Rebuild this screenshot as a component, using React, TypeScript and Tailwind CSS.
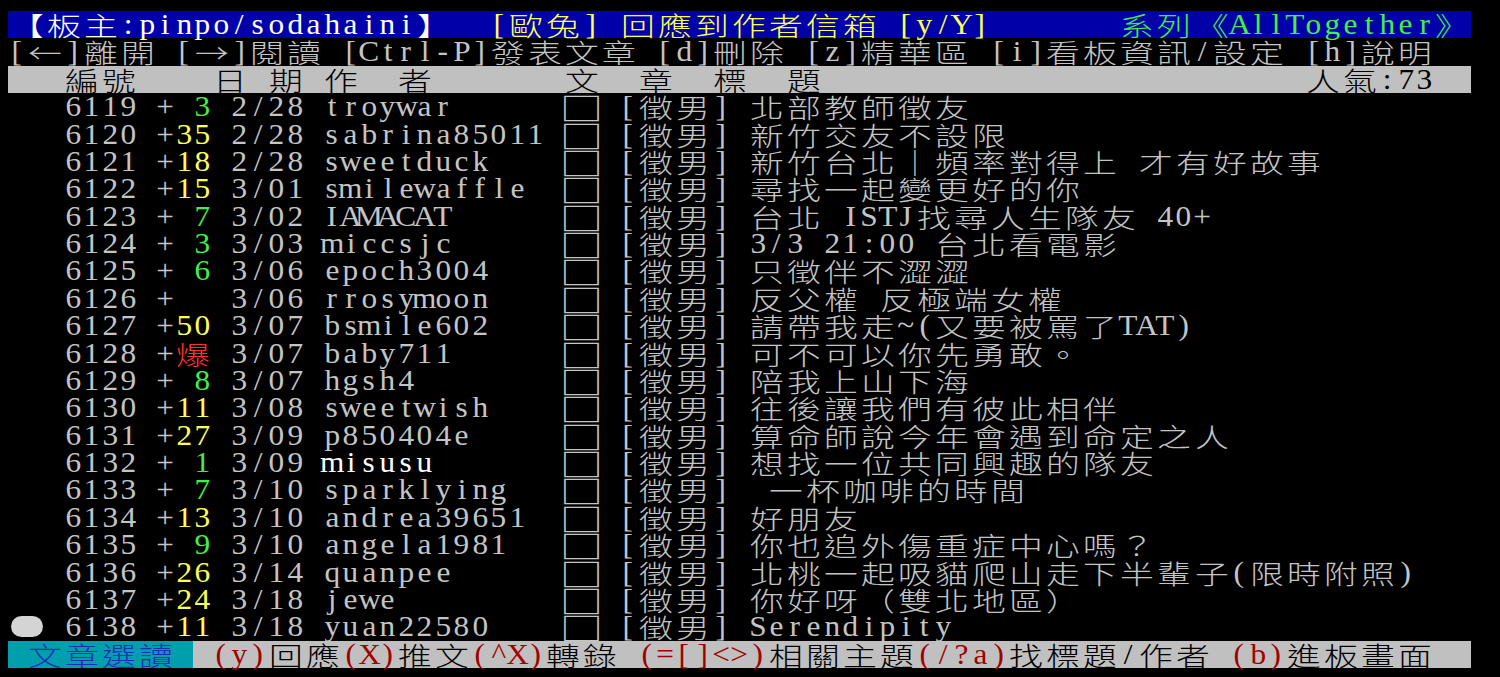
import React from 'react';

type Seg = { t: string; c: string; b?: string };

const G = 'text-[#c4c4c4]';
const WH = 'text-[#ffffff]';
const Y = 'text-[#ffff55]';
const GR = 'text-[#44ee44]';
const R = 'text-[#ff3030]';
const K = 'text-[#000000]';
const DR = 'text-[#a00000]';
const BL = 'text-[#1a2fb8]';

function Cells({ seg }: { seg: Seg }) {
  const bg = seg.b ?? '';
  return (
    <>
      {Array.from(seg.t).map((ch, i) => {
        if (ch === ' ') return <span key={i} className={`w-[18.52px] shrink-0 ${bg}`} />;
        if (ch === '□')
          return (
            <span key={i} className={`w-[37.04px] shrink-0 flex justify-center font-['Noto_Sans_CJK_TC','Noto_Sans_CJK_SC',sans-serif] text-[31px] ${seg.c} ${bg}`}>
              <span className="inline-block scale-x-[1.4]">{ch}</span>
            </span>
          );
        const wide = ch.charCodeAt(0) > 0x7e;
        return wide ? (
          <span key={i} className={`w-[37.04px] shrink-0 flex justify-center font-['Noto_Sans_CJK_TC','Noto_Sans_CJK_SC',sans-serif] text-[26px] font-light ${seg.c} ${bg}`}>
            <span className="inline-block scale-x-[1.3]">{ch}</span>
          </span>
        ) : (
          <span key={i} className={`w-[18.52px] shrink-0 flex justify-center font-['Liberation_Serif',serif] text-[29px] ${seg.c} ${bg}`}>
            <span className="inline-block scale-x-[1.08]">{ch}</span>
          </span>
        );
      })}
    </>
  );
}

function Row({ segs, bg = '', cursor = false }: { segs: Seg[]; bg?: string; cursor?: boolean }) {
  return (
    <div className={`flex h-[27.39px] leading-[27.39px] w-[1463px] ${bg}`}>
      {cursor && (
        <span className="w-[37.04px] shrink-0 flex items-center justify-center">
          <span className="block w-[32px] h-[21px] rounded-full bg-[#d4d4d4]" />
        </span>
      )}
      {segs.map((s, i) => (
        <Cells key={i} seg={s} />
      ))}
    </div>
  );
}

type Post = { n: number; cnt: string; cc: string; d: string; a: string; t: string; ac?: string; cur?: boolean };

const posts: Post[] = [
  { n: 6119, cnt: '3', cc: GR, d: '2/28', a: 'troywar', t: '北部教師徵友' },
  { n: 6120, cnt: '35', cc: Y, d: '2/28', a: 'sabrina85011', t: '新竹交友不設限' },
  { n: 6121, cnt: '18', cc: Y, d: '2/28', a: 'sweetduck', t: '新竹台北｜頻率對得上 才有好故事' },
  { n: 6122, cnt: '15', cc: Y, d: '3/01', a: 'smilewaffle', t: '尋找一起變更好的你' },
  { n: 6123, cnt: '7', cc: GR, d: '3/02', a: 'IAMACAT', t: '台北 ISTJ找尋人生隊友 40+' },
  { n: 6124, cnt: '3', cc: GR, d: '3/03', a: 'miccsjc', t: '3/3 21:00 台北看電影' },
  { n: 6125, cnt: '6', cc: GR, d: '3/06', a: 'epoch3004', t: '只徵伴不澀澀' },
  { n: 6126, cnt: '', cc: G, d: '3/06', a: 'rrosymoon', t: '反父權 反極端女權' },
  { n: 6127, cnt: '50', cc: Y, d: '3/07', a: 'bsmile602', t: '請帶我走~(又要被罵了TAT)' },
  { n: 6128, cnt: '爆', cc: R, d: '3/07', a: 'baby711', t: '可不可以你先勇敢。' },
  { n: 6129, cnt: '8', cc: GR, d: '3/07', a: 'hgsh4', t: '陪我上山下海' },
  { n: 6130, cnt: '11', cc: Y, d: '3/08', a: 'sweetwish', t: '往後讓我們有彼此相伴' },
  { n: 6131, cnt: '27', cc: Y, d: '3/09', a: 'p850404e', t: '算命師說今年會遇到命定之人' },
  { n: 6132, cnt: '1', cc: GR, d: '3/09', a: 'misusu', t: '想找一位共同興趣的隊友', ac: WH },
  { n: 6133, cnt: '7', cc: GR, d: '3/10', a: 'sparklying', t: ' 一杯咖啡的時間' },
  { n: 6134, cnt: '13', cc: Y, d: '3/10', a: 'andrea39651', t: '好朋友' },
  { n: 6135, cnt: '9', cc: GR, d: '3/10', a: 'angela1981', t: '你也追外傷重症中心嗎？' },
  { n: 6136, cnt: '26', cc: Y, d: '3/14', a: 'quanpee', t: '北桃一起吸貓爬山走下半輩子(限時附照)' },
  { n: 6137, cnt: '24', cc: Y, d: '3/18', a: 'jewe', t: '你好呀（雙北地區）' },
  { n: 6138, cnt: '11', cc: Y, d: '3/18', a: 'yuan22580', t: 'Serendipity', cur: true },
];

function PostRow({ p }: { p: Post }) {
  const cnt = p.cnt === '爆' ? p.cnt : p.cnt.padStart(2, ' ');
  const segs: Seg[] = [
    { t: (p.cur ? '' : '  ') + ' ' + p.n + ' +', c: G },
    { t: cnt, c: p.cc },
    { t: ' ' + p.d + ' ', c: G },
    { t: p.a.padEnd(12, ' '), c: p.ac ?? G },
    { t: ' □ [徵男] ' + p.t, c: G },
  ];
  return <Row segs={segs} cursor={p.cur} />;
}

export default function App() {
  return (
    <div className="w-[1500px] h-[677px] bg-black overflow-hidden pl-[8px] pt-[11px]">
      <div className="flex flex-col">
        <Row
          bg="bg-[#0000a8]"
          segs={[
            { t: '【板主:pinpo/sodahaini】  ', c: WH },
            { t: '[歐兔] 回應到作者信箱 [y/Y]       ', c: Y },
            { t: '系列《AllTogether》', c: 'text-[#44ee44]' },
          ]}
        />
        <Row segs={[{ t: '[←]離開 [→]閱讀 [Ctrl-P]發表文章 [d]刪除 [z]精華區 [i]看板資訊/設定 [h]說明', c: G }]} />
        <Row
          bg="bg-[#c0c0c0]"
          segs={[
            {
              t: '   編號    日 期 作  者       文  章  標  題                          人氣:73  ',
              c: K,
            },
          ]}
        />
        {posts.map((p) => (
          <PostRow key={p.n} p={p} />
        ))}
        <Row
          bg="bg-[#c0c0c0]"
          segs={[
            { t: ' 文章選讀 ', c: BL, b: 'bg-[#009fae]' },
            { t: ' ', c: K },
            { t: '(y)', c: DR },
            { t: '回應', c: K },
            { t: '(X)', c: DR },
            { t: '推文', c: K },
            { t: '(^X)', c: DR },
            { t: '轉錄 ', c: K },
            { t: '(=[]<>)', c: DR },
            { t: '相關主題', c: K },
            { t: '(/?a)', c: DR },
            { t: '找標題/作者 ', c: K },
            { t: '(b)', c: DR },
            { t: '進板畫面  ', c: K },
          ]}
        />
      </div>
    </div>
  );
}
